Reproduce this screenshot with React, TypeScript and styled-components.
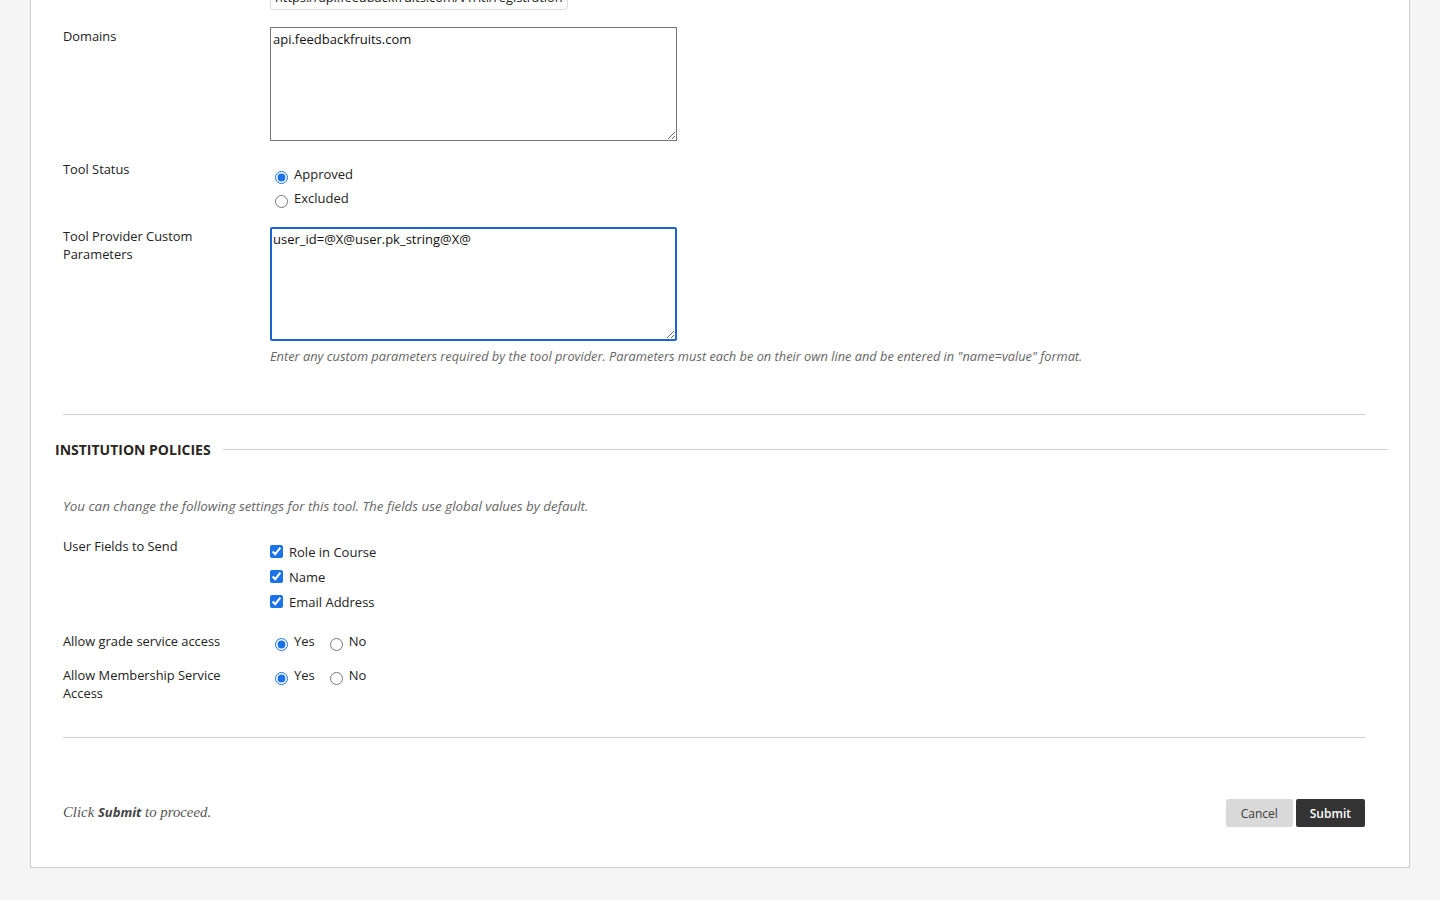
import React from "react";
import styled, { createGlobalStyle } from "styled-components";

const GlobalStyle = createGlobalStyle`
  html, body {
    margin: 0;
    padding: 0;
    background: #f5f5f5;
    font-family: "Open Sans", "Liberation Sans", sans-serif;
    color: #222;
    overflow: hidden;
  }
  * { box-sizing: border-box; }
`;

const Page = styled.div`
  height: 900px;
  overflow: hidden;
  padding: 0 30px;
`;

const Panel = styled.div`
  margin-top: -16px;
  background: #fff;
  border: 1px solid #cccccc;
  border-top: none;
  padding: 0 44px 40px 32px;
  display: flex;
  flex-direction: column;
`;

const Row = styled.div<{ $mt?: number }>`
  display: grid;
  grid-template-columns: 207px 1fr;
  margin-top: ${(p) => p.$mt ?? 0}px;
`;

const Label = styled.div`
  font-size: 12.85px;
  line-height: 18px;
  color: #222;
  padding-right: 40px;
`;

const Field = styled.div`
  display: flex;
  flex-direction: column;
  align-items: flex-start;
`;

const UrlInput = styled.div`
  width: 298px;
  height: 26px;
  border: 1px solid #dcdcdc;
  border-radius: 4px;
  padding: 0 4px;
  font-size: 12.8px;
  line-height: 24px;
  color: #222;
  white-space: nowrap;
  overflow: hidden;
`;

const TextArea = styled.textarea<{ $focused?: boolean }>`
  width: 407px;
  height: 114px;
  resize: both;
  font-family: "Open Sans", "Liberation Sans", sans-serif;
  font-size: 13px;
  line-height: 18px;
  color: #111;
  margin: 0;
  border: ${(p) => (p.$focused ? "2px solid #1b63d3" : "1px solid #767676")};
  border-radius: ${(p) => (p.$focused ? "2px" : "0")};
  padding: ${(p) => (p.$focused ? "1px" : "2px")};
  outline: none;
  background: #fff;
`;

const OptionList = styled.div<{ $pt?: number; $inline?: boolean }>`
  display: flex;
  flex-direction: ${(p) => (p.$inline ? "row" : "column")};
  gap: ${(p) => (p.$inline ? "10px" : "0")};
  padding-top: ${(p) => p.$pt ?? 0}px;
`;

const Option = styled.label<{ $h: number }>`
  display: flex;
  align-items: center;
  height: ${(p) => p.$h}px;
  font-size: 13px;
  color: #222;
  white-space: nowrap;
`;

const Radio = styled.input.attrs({ type: "radio" })`
  width: 13px;
  height: 13px;
  margin: 6px 6px 0 5px;
  accent-color: #1a73e8;
`;

const Check = styled.input.attrs({ type: "checkbox" })`
  width: 13px;
  height: 13px;
  margin: 0 6px 0 0;
  accent-color: #1a73e8;
`;

const Help = styled.div`
  margin-top: 7px;
  font-size: 12.8px;
  line-height: 17px;
  font-style: italic;
  color: #666;
  white-space: nowrap;
`;

const Divider = styled.hr<{ $mt: number }>`
  margin: ${(p) => p.$mt}px 0 0 0;
  border: none;
  border-top: 1px solid #cfcfcf;
  height: 0;
  width: 100%;
`;

const SectionHeading = styled.div`
  margin: 24px -23px 0 -8px;
  display: flex;
  align-items: center;
  gap: 12px;
  height: 20px;
`;

const HeadingText = styled.h2`
  margin: 0;
  font-size: 14px;
  font-weight: 700;
  color: #2a2623;
  text-transform: uppercase;
  white-space: nowrap;
`;

const HeadingLine = styled.div`
  flex: 1;
  border-top: 1px solid #cfcfcf;
`;

const Intro = styled.p`
  margin: 38px 0 0 0;
  font-size: 13.4px;
  line-height: 18px;
  font-style: italic;
  color: #666;
`;

const Footer = styled.div`
  margin-top: 61px;
  display: flex;
  align-items: center;
  justify-content: space-between;
  height: 28px;
`;

const FooterNote = styled.p`
  margin: 0 0 3px 0;
  font-family: "Liberation Serif", "DejaVu Serif", serif;
  font-style: italic;
  font-size: 14.8px;
  color: #555;
  b {
    font-family: "Open Sans", "Liberation Sans", sans-serif;
    font-weight: 700;
    font-style: italic;
    font-size: 13px;
    color: #444;
  }
`;

const ButtonGroup = styled.div`
  display: flex;
  gap: 3px;
`;

const Button = styled.button<{ $primary?: boolean }>`
  height: 28px;
  padding: 0 ${(p) => (p.$primary ? "14px" : "15px")};
  border: none;
  border-radius: 2px;
  font-family: "Open Sans", "Liberation Sans", sans-serif;
  font-size: 12px;
  font-weight: ${(p) => (p.$primary ? 600 : 400)};
  background: ${(p) => (p.$primary ? "#333333" : "#d9d9d9")};
  color: ${(p) => (p.$primary ? "#ffffff" : "#3a3a3a")};
  cursor: pointer;
`;

export default function App() {
  return (
    <>
      <GlobalStyle />
      <Page>
        <Panel>
          <Row>
            <Label />
            <Field>
              <UrlInput>https://api.feedbackfruits.com/v1/lti/registration</UrlInput>
            </Field>
          </Row>

          <Row $mt={17}>
            <Label>Domains</Label>
            <Field>
              <TextArea defaultValue="api.feedbackfruits.com" />
            </Field>
          </Row>

          <Row $mt={19}>
            <Label>Tool Status</Label>
            <OptionList $pt={2}>
              <Option $h={24}>
                <Radio name="status" defaultChecked />
                Approved
              </Option>
              <Option $h={24}>
                <Radio name="status" />
                Excluded
              </Option>
            </OptionList>
          </Row>

          <Row $mt={17}>
            <Label>Tool Provider Custom Parameters</Label>
            <Field>
              <TextArea $focused defaultValue="user_id=@X@user.pk_string@X@" />
              <Help>
                Enter any custom parameters required by the tool provider. Parameters must each be on their own line and be entered in "name=value" format.
              </Help>
            </Field>
          </Row>

          <Divider $mt={49} />

          <SectionHeading>
            <HeadingText>Institution Policies</HeadingText>
            <HeadingLine />
          </SectionHeading>

          <Intro>You can change the following settings for this tool. The fields use global values by default.</Intro>

          <Row $mt={22}>
            <Label>User Fields to Send</Label>
            <OptionList $pt={2}>
              <Option $h={25}>
                <Check defaultChecked />
                Role in Course
              </Option>
              <Option $h={25}>
                <Check defaultChecked />
                Name
              </Option>
              <Option $h={25}>
                <Check defaultChecked />
                Email Address
              </Option>
            </OptionList>
          </Row>

          <Row $mt={18}>
            <Label>Allow grade service access</Label>
            <OptionList $inline>
              <Option $h={18}>
                <Radio name="grade" defaultChecked />
                Yes
              </Option>
              <Option $h={18}>
                <Radio name="grade" />
                No
              </Option>
            </OptionList>
          </Row>

          <Row $mt={16}>
            <Label>Allow Membership Service Access</Label>
            <OptionList $inline>
              <Option $h={18}>
                <Radio name="membership" defaultChecked />
                Yes
              </Option>
              <Option $h={18}>
                <Radio name="membership" />
                No
              </Option>
            </OptionList>
          </Row>

          <Divider $mt={35} />

          <Footer>
            <FooterNote>
              Click <b>Submit</b> to proceed.
            </FooterNote>
            <ButtonGroup>
              <Button>Cancel</Button>
              <Button $primary>Submit</Button>
            </ButtonGroup>
          </Footer>
        </Panel>
      </Page>
    </>
  );
}
